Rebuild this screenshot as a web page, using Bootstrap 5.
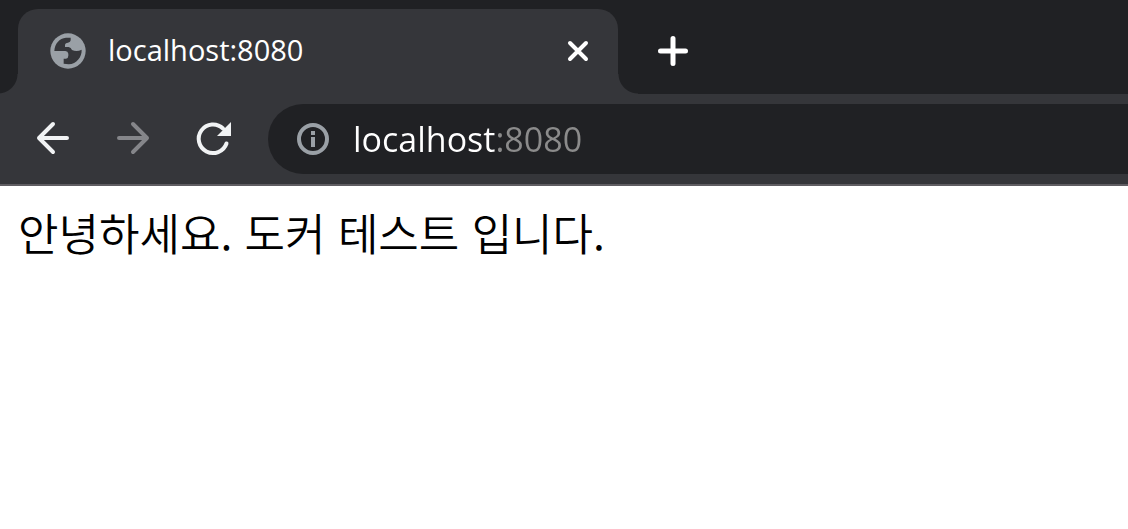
<!DOCTYPE html>
<html lang="ko">
<head>
<meta charset="utf-8">
<meta name="viewport" content="width=device-width, initial-scale=1">
<title>localhost:8080</title>
<link href="https://cdn.jsdelivr.net/npm/bootstrap@5.3.0/dist/css/bootstrap.min.css" rel="stylesheet">
<style>
  :root { --frame: #202124; --toolbar: #35363a; --muted-icon: #9aa0a6; }
  body { background: #fff; font-family: "Open Sans", "Noto Sans CJK KR", sans-serif; }
  .tab-strip { background: var(--frame); padding: 9px 20px 0 18px; }
  .browser-tab {
    position: relative; flex: 0 1 600px; height: 85px; min-width: 0;
    padding: 0 22px 2px 32px; border-radius: 20px 20px 0 0;
    background: var(--toolbar); color: #fff;
  }
  /* Concave feet where the tab meets the toolbar */
  .browser-tab::before, .browser-tab::after {
    content: ""; position: absolute; bottom: 0; width: 20px; height: 20px;
  }
  .browser-tab::before { right: 100%; background: radial-gradient(circle at 0 0, var(--frame) 19px, var(--toolbar) 20px); }
  .browser-tab::after { left: 100%; background: radial-gradient(circle at 100% 0, var(--frame) 19px, var(--toolbar) 20px); }
  .tab-title { margin-left: 22px; padding-bottom: 2px; font-size: 29px; line-height: 40px; }
  .icon-btn { display: flex; padding: 0; border: 0; background: none; color: #fff; }
  .new-tab { margin: 0 0 2px 37px; }
  .nav-bar { background: var(--toolbar); border-bottom: 2px solid #5f5d62; padding: 10px 0 10px 33px; }
  .nav-buttons { gap: 40px; padding-right: 35px; }
  .nav-buttons .icon-btn { color: #f1f3f4; }
  .nav-buttons .icon-btn:disabled { color: #85868a; }
  .address-box { height: 70px; min-width: 0; border-radius: 35px 0 0 35px; background: var(--frame); padding-left: 27px; gap: 22px; }
  .address-input {
    border: 0; padding: 0; min-width: 0; font-size: 34px; line-height: 48px; color: #fff;
    background: linear-gradient(to right, #fff 142px, #8b8b8b 142px);
    -webkit-background-clip: text; background-clip: text;
    -webkit-text-fill-color: transparent; outline-offset: 4px;
  }
  .page-text { margin: 0; padding: 16px 18px; font-family: "Noto Sans CJK KR", sans-serif; font-size: 44px; line-height: 60px; font-weight: 350; color: #000; }
</style>
</head>
<body>
<header>
  <div class="tab-strip d-flex align-items-center">
    <div class="browser-tab d-flex align-items-center">
      <svg class="flex-shrink-0" width="36" height="36" viewBox="0 0 108 108" aria-hidden="true">
        <circle cx="54" cy="54" r="53" fill="#9aa0a6"/>
        <path fill="#35363a" d="M13 54C14 32 28 16 48 14H62V22Q62 28 54 29Q45 30 45 36V42H56Q63 43 66 51Q80 58 95 50C96 72 80 92 56 94L41 92V77H48Q55 76 55 68V62Q54 55 46 54Z"/>
      </svg>
      <span class="tab-title flex-grow-1 text-truncate">localhost:8080</span>
      <button class="icon-btn" type="button" aria-label="Close tab">
        <svg width="36" height="36" viewBox="0 0 36 36" fill="none" stroke="currentColor" stroke-width="4" stroke-linecap="round"><path d="M10 10 26 26M26 10 10 26"/></svg>
      </button>
    </div>
    <button class="icon-btn new-tab" type="button" aria-label="New tab">
      <svg width="36" height="36" viewBox="0 0 36 36" fill="none" stroke="currentColor" stroke-width="5" stroke-linecap="round"><path d="M18 5.500V30.500M5.500 18H30.500"/></svg>
    </button>
  </div>
  <nav class="nav-bar d-flex align-items-center" aria-label="Browser toolbar">
    <div class="nav-buttons d-flex">
      <button class="icon-btn" type="button" aria-label="Back">
        <svg width="40" height="40" viewBox="0 0 40 40" fill="none" stroke="currentColor" stroke-width="4" stroke-linecap="round" stroke-linejoin="round"><path d="M34 19H6M20 5 6 19 20 33"/></svg>
      </button>
      <button class="icon-btn" type="button" aria-label="Forward" disabled>
        <svg width="40" height="40" viewBox="0 0 40 40" fill="none" stroke="currentColor" stroke-width="4" stroke-linecap="round" stroke-linejoin="round"><path d="M6 19H34M20 5 34 19 20 33"/></svg>
      </button>
      <button class="icon-btn" type="button" aria-label="Reload">
        <svg width="40" height="40" viewBox="0 0 40 40" fill="none" stroke="currentColor" stroke-width="4" stroke-linecap="round"><path d="M30 9.500A14.300 14.300 0 1 0 33.500 24.500"/><path fill="currentColor" stroke="none" d="M38 3V17H24Z"/></svg>
      </button>
    </div>
    <div class="address-box d-flex align-items-center flex-grow-1">
      <svg class="flex-shrink-0" width="36" height="36" viewBox="0 0 36 36" aria-hidden="true">
        <circle cx="18" cy="18" r="14" fill="none" stroke="#9aa0a6" stroke-width="4"/>
        <path fill="#9aa0a6" d="M16 10H20V14H16ZM16 16H20V26H16Z"/>
      </svg>
      <input class="address-input flex-grow-1" type="text" aria-label="Address" value="localhost:8080" spellcheck="false">
    </div>
  </nav>
</header>
<main>
  <p class="page-text">안녕하세요. 도커 테스트 입니다.</p>
</main>
<script src="https://cdn.jsdelivr.net/npm/bootstrap@5.3.0/dist/js/bootstrap.bundle.min.js"></script>
</body>
</html>
